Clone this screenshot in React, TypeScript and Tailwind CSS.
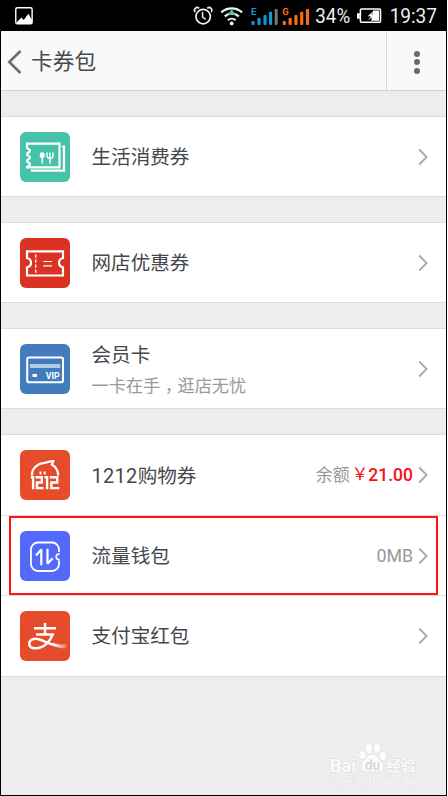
import React from 'react';

interface RowProps {
  icon: React.ReactNode;
  title: React.ReactNode;
  subtitle?: React.ReactNode;
  extra?: React.ReactNode;
  className?: string;
}

const StatusBar = () => (
  <div className="flex h-[31px] shrink-0 bg-black">
    <svg width="446" height="31" viewBox="0 0 446 31" fill="none">
      {/* Gallery notification */}
      <rect x="14.8" y="7.8" width="16.4" height="16" rx="1.6" stroke="#fff" strokeWidth="1.4" />
      <path d="M16 24v-2l4.5-4.5 2.2 2.6 4.8-6.4L31 20v4z" fill="#fff" />
      {/* Alarm clock */}
      <circle cx="202.6" cy="16.6" r="7.2" stroke="#eee" strokeWidth="1.7" />
      <path d="M202 12v5l3 2.4" stroke="#eee" strokeWidth="1.5" />
      <path d="M194.700 12a2.600 2.600 0 0 1 3.800-3.600M206.800 8.400a2.600 2.600 0 0 1 3.800 3.600" stroke="#eee" strokeWidth="1.700" />
      {/* Wifi */}
      <path d="M220.800 12.400a15.500 15.500 0 0 1 20.800 0" stroke="#f2f2f2" strokeWidth="2.200" />
      <path d="M224.300 16.400a10.300 10.300 0 0 1 14 0" stroke="#f2f2f2" strokeWidth="2.200" />
      <path d="M227.400 20.200a6 6 0 0 1 7.800 0" stroke="#f2f2f2" strokeWidth="2" />
      <circle cx="231.200" cy="23.400" r="1.900" fill="#f2f2f2" />
      <path d="M231.200 9.300l4.200 5.500h-8.400z" fill="#5dbb98" />
      {/* Signal bars */}
      <g fill="#0f96db">
        <rect x="251" y="21" width="3.200" height="4" rx="1" />
        <rect x="257" y="18" width="3.200" height="7" rx="1" />
        <rect x="263" y="15" width="3.200" height="10" rx="1" />
        <rect x="268.600" y="11.800" width="3.200" height="13.200" rx="1" />
      </g>
      <rect x="274.300" y="9" width="3" height="16" rx="1" fill="#777" />
      <g fill="#ff6a13">
        <rect x="282.300" y="21" width="3.200" height="4" rx="1" />
        <rect x="288.200" y="18" width="3.200" height="7" rx="1" />
        <rect x="294" y="15" width="3.200" height="10" rx="1" />
        <rect x="299.800" y="11.800" width="3.200" height="13.200" rx="1" />
        <rect x="305.600" y="9" width="3.200" height="16" rx="1" />
      </g>
      <text x="250.500" y="15.300" fontSize="9.500" fontWeight="700" fill="#0f96db">E</text>
      <text x="282" y="15.300" fontSize="9.500" fontWeight="700" fill="#ff6a13">G</text>
      <text x="315" y="23.400" fontSize="19.500" fill="#eee" textLength="35" lengthAdjust="spacingAndGlyphs">34%</text>
      {/* Battery */}
      <rect x="360.200" y="9" width="20.200" height="13.300" rx="1" stroke="#fff" strokeWidth="1.500" />
      <path d="M356.800 13.200h2.800v5.600h-2.800zM373 10.500h6v10.300h-8z" fill="#fff" />
      <path d="M373.500 10.800l-6 5.400h3.200l-3 4.300 7-5.700h-3.400z" fill="#fff" />
      <text x="389.500" y="23.400" fontSize="20.300" fill="#eee" textLength="47.500" lengthAdjust="spacingAndGlyphs">19:37</text>
    </svg>
  </div>
);

const Header = () => (
  <div className="flex h-[60px] shrink-0 border-b border-[#d2d2d2] bg-[#f9f9f9]">
    <div className="flex flex-1 items-center pt-[2px] pl-[6px]">
      <svg width="16" height="26" viewBox="0 0 16 26" fill="none">
        <path d="M13.500 2L2.200 13l11.300 11" stroke="#656d78" strokeWidth="2.500" />
      </svg>
      <span className="ml-[8px] text-[21.700px] leading-none text-[#4a4a4a]">卡券包</span>
    </div>
    <div className="flex w-[60px] flex-col items-center justify-center gap-[2.500px] border-l border-[#d6d6d6] pt-[3px]">
      <span className="size-[6px] rounded-full bg-[#646b75]" />
      <span className="size-[6px] rounded-full bg-[#646b75]" />
      <span className="size-[6px] rounded-full bg-[#646b75]" />
    </div>
  </div>
);

const CouponIcon = () => (
  <svg width="50" height="50" viewBox="0 0 50 50" fill="none">
    <rect width="50" height="50" rx="6" fill="#46c1aa" />
    <path d="M7 11.700h32.500v23.600H7c0-1.500 3-1.200 3-3.200s-3-1.400-3-3.100 3-1.800 3-3.600-3-1.500-3-3.200 3-1.800 3-3.600-3-1.500-3-3.200z" stroke="#fff" strokeWidth="2.200" />
    <path d="M42 14.500h2v24.200H11" stroke="#fff" strokeWidth="2.200" />
    <ellipse cx="22.200" cy="23.200" rx="2.500" ry="3" fill="#fff" />
    <path d="M22.200 24v7.500M30 20.500v11M27 20.500v3.500q0 2.300 3 2.300t3-2.300v-3.500" stroke="#fff" strokeWidth="1.500" />
  </svg>
);

const TicketIcon = () => (
  <svg width="50" height="50" viewBox="0 0 50 50" fill="none">
    <rect width="50" height="50" rx="6" fill="#da3223" />
    <path d="M7 13.300h36v6.700q-4 1-4 4.700t4 4.700v8.100H7v-8.100q4-1 4-4.700T7 20z" stroke="#fff" strokeWidth="2.200" />
    <path d="M15.700 16.500v18.500" stroke="#fff" strokeWidth="1.300" strokeDasharray="3.200 1.800" />
    <path d="M23.300 23.500H32M23.300 27.800H32" stroke="#fff" strokeWidth="1.200" />
  </svg>
);

const VipIcon = () => (
  <svg width="50" height="50" viewBox="0 0 50 50" fill="none">
    <rect width="50" height="50" rx="6" fill="#427cbd" />
    <rect x="7.200" y="13.500" width="35.800" height="24.700" rx="1.800" stroke="#fff" strokeWidth="2" />
    <rect x="10" y="20" width="30.200" height="4" fill="#b5cbe5" />
    <rect x="12.500" y="30" width="4.500" height="3" fill="#fff" />
    <text x="25.800" y="35" fontSize="8.500" fontWeight="700" fill="#fff" textLength="14" lengthAdjust="spacingAndGlyphs">VIP</text>
  </svg>
);

const Shopping1212Icon = () => (
  <svg width="50" height="50" viewBox="0 0 50 50" fill="none">
    <rect width="50" height="50" rx="6" fill="#e64c2c" />
    <path d="M12 25.500c-.4-7.500 6-12 12.500-12.600 2.600-.4 5.500-1.900 8.800-1.700l-1.500 3.300c4.300 2.500 6.200 6 6.500 11" stroke="#fff" strokeWidth="2.200" />
    <path d="M20.500 21.500v3M24.700 21.500v3" stroke="#fff" strokeWidth="1.900" />
    <path d="M10.800 27.300h2.300v12M15.500 27.300h6.300v5.200h-4.800v5.600h6.600M24.500 27.300h2.600v12M29.800 27.300h7.400v5.200h-5.900v5.600h8" stroke="#fff" strokeWidth="2.400" />
  </svg>
);

const FlowIcon = () => (
  <svg width="50" height="50" viewBox="0 0 50 50" fill="none">
    <rect width="50" height="50" rx="6" fill="#5269fb" />
    <path d="M39 21v-2.500a7 7 0 0 0-7-7H18a7 7 0 0 0-7 7V33a7 7 0 0 0 7 7h14a7 7 0 0 0 7-7v-3.500" stroke="#fff" strokeWidth="1.800" />
    <path d="M39.800 23h-.800a2.800 2.800 0 0 0 0 5.600h.800" stroke="#fff" strokeWidth="1.700" />
    <path d="M16 24.500l5.300-6v15.700M27.500 17.700v15l5.200-5.500" stroke="#fff" strokeWidth="2.200" strokeLinejoin="bevel" />
  </svg>
);

const AlipayIcon = () => (
  <svg width="50" height="50" viewBox="0 0 50 50" fill="none">
    <defs>
      <linearGradient id="tail" x1="34" y1="0" x2="48" y2="0" gradientUnits="userSpaceOnUse">
        <stop stopColor="#fff" />
        <stop offset="1" stopColor="#fff" stopOpacity="0.100" />
      </linearGradient>
    </defs>
    <rect width="50" height="50" rx="6" fill="#e64c2c" />
    <path d="M14 17.300h22M25 12v11.500M16 23.500h16.700C30.500 29.500 24.500 37.200 15.500 37.300c-4.400.1-6.700-2-6.200-5.200.5-3.400 4.700-5 9.200-3.900 5.500 1.300 10.500 4.800 17 6.200" stroke="#fff" strokeWidth="2.500" />
    <path d="M32 31.700c5 1.700 9 2.100 15.500 1.500l-1.500 4.300c-5 0-10.500-1.500-15.500-3.800z" fill="url(#tail)" />
  </svg>
);

const Row: React.FC<RowProps> = ({ icon, title, subtitle, extra, className = 'h-[79px]' }) => (
  <div className={`flex items-center pl-[19px] pr-[18px] ${className}`}>
    {icon}
    <div className="ml-[21.500px] flex-1 pt-[2px] text-[19.600px] leading-none whitespace-nowrap text-[#45484c]">
      <div className={subtitle ? 'pt-[2px]' : ''}>{title}</div>
      {subtitle && <div className="mt-[11px] text-[17.200px] text-[#999]">{subtitle}</div>}
    </div>
    {extra && <div className="flex items-center pt-[1px] text-[17.300px] leading-none whitespace-nowrap text-[#999]">{extra}</div>}
    <svg className="ml-[5px]" width="10" height="18" viewBox="0 0 10 18" fill="none">
      <path d="M1.200 1.500L8.600 9l-7.400 7.500" stroke="#aaa" strokeWidth="1.900" />
    </svg>
  </div>
);

const Card = ({ children }: { children: React.ReactNode }) => (
  <div className="border-y border-[#dcdcdc] bg-white">{children}</div>
);

const Watermark = () => (
  <svg className="absolute right-[20px] bottom-[8px]" width="98" height="50" viewBox="0 0 98 50">
    <g fill="#fcfcfc" stroke="#d8d8d8" strokeWidth="0.800" paintOrder="stroke">
      <ellipse cx="34.500" cy="18" rx="3.200" ry="4.300" />
      <ellipse cx="40.800" cy="11.500" rx="3.500" ry="4.800" />
      <ellipse cx="49" cy="11.500" rx="3.500" ry="4.800" />
      <ellipse cx="55" cy="19" rx="3.200" ry="4.300" />
      <path d="M44.500 17.500c5 0 6 5 9 8s1.500 9-3.500 9H38.500c-5 0-6.500-6-3.500-9s4.500-8 9.500-8z" />
      <text x="2" y="34.500" fontSize="18.500" fontWeight="700" textLength="26" lengthAdjust="spacingAndGlyphs">Bai</text>
      <text x="58.500" y="33.500" fontSize="14.500" fontWeight="700" textLength="29" lengthAdjust="spacingAndGlyphs">经验</text>
      <text x="3" y="48" fontSize="9.500" fontWeight="700" strokeWidth="0.500" fill="#f8f8f8" textLength="86" lengthAdjust="spacingAndGlyphs" className="font-['Liberation_Serif',serif]">jingyan.baidu.com</text>
    </g>
    <text x="37" y="33" fontSize="14" fontWeight="700" fill="#d9d9d9" textLength="15" lengthAdjust="spacingAndGlyphs">du</text>
  </svg>
);

export default function App() {
  return (
    <div className="h-[796px] w-[448px] bg-white font-[Roboto,'Noto_Sans_CJK_SC',sans-serif]">
      <div className="relative flex h-full w-[447px] flex-col overflow-hidden border-x border-b border-black bg-[#ededed]">
        <StatusBar />
        <Header />
        <div className="mt-[25px] flex flex-col gap-[25px]">
          <Card>
            <Row icon={<CouponIcon />} title="生活消费券" />
          </Card>
          <Card>
            <Row icon={<TicketIcon />} title="网店优惠券" />
          </Card>
          <Card>
            <Row
              icon={<VipIcon />}
              title="会员卡"
              subtitle={<>一卡在手<span className="inline-block translate-y-[5px] font-['Noto_Sans_CJK_TC']">，</span>逛店无忧</>}
            />
          </Card>
          <Card>
            <Row
              icon={<Shopping1212Icon />}
              title={<><span className="text-[20px] tracking-[0.300px]">1212</span>购物券</>}
              extra={
                <>
                  <span className="text-[17px]">余额</span>
                  <span className="ml-[2px] text-[16.500px] text-[#fb0d14]">￥</span>
                  <span className="text-[17.500px] font-medium text-[#fb0d14]">21.00</span>
                </>
              }
              className="h-[80px]"
            />
            <Row icon={<FlowIcon />} title="流量钱包" extra={<span className="text-[17.800px]">0MB</span>} className="h-[80px] border-t border-[#dcdcdc]" />
            <Row icon={<AlipayIcon />} title="支付宝红包" className="h-[81px] border-t border-[#dcdcdc]" />
          </Card>
        </div>
        {/* Highlighted row */}
        <div className="absolute top-[516px] left-[7.500px] h-[79px] w-[429px] border-2 border-[#fd1515]" />
        <Watermark />
      </div>
    </div>
  );
}
